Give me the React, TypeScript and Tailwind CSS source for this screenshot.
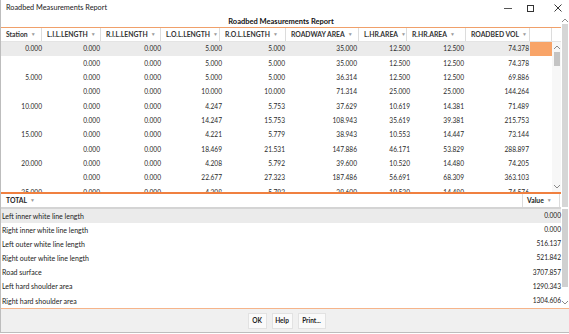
import React from 'react';

const font = { fontFamily: 'Lato, "Liberation Sans", sans-serif' };

const headers = [
  { label: 'Station', w: 'w-[41px]' },
  { label: 'L.I.L.LENGTH', w: 'w-[59px]' },
  { label: 'R.I.L.LENGTH', w: 'w-[60px]' },
  { label: 'L.O.L.LENGTH', w: 'w-[59px]' },
  { label: 'R.O.L.LENGTH', w: 'w-[66px]' },
  { label: 'ROADWAY AREA', w: 'w-[73px]' },
  { label: 'L.HR.AREA', w: 'w-[48px]' },
  { label: 'R.HR.AREA', w: 'w-[59px]' },
  { label: 'ROADBED VOL', w: 'w-[64px]' },
];

// data columns are laid out a touch differently from the header cells
const cellW = ['w-[41px]', 'w-[58px]', 'w-[61px]', 'w-[61px]', 'w-[63px]', 'w-[72px]', 'w-[53px]', 'w-[54px]', 'w-[65px]'];

const rows = [
  ['0.000', '0.000', '0.000', '5.000', '5.000', '35.000', '12.500', '12.500', '74.378'],
  ['', '0.000', '0.000', '5.000', '5.000', '35.000', '12.500', '12.500', '74.378'],
  ['5.000', '0.000', '0.000', '5.000', '5.000', '36.314', '12.500', '12.500', '69.886'],
  ['', '0.000', '0.000', '10.000', '10.000', '71.314', '25.000', '25.000', '144.264'],
  ['10.000', '0.000', '0.000', '4.247', '5.753', '37.629', '10.619', '14.381', '71.489'],
  ['', '0.000', '0.000', '14.247', '15.753', '108.943', '35.619', '39.381', '215.753'],
  ['15.000', '0.000', '0.000', '4.221', '5.779', '38.943', '10.553', '14.447', '73.144'],
  ['', '0.000', '0.000', '18.469', '21.531', '147.886', '46.171', '53.829', '288.897'],
  ['20.000', '0.000', '0.000', '4.208', '5.792', '39.600', '10.520', '14.480', '74.205'],
  ['', '0.000', '0.000', '22.677', '27.323', '187.486', '56.691', '68.309', '363.103'],
  ['25.000', '0.000', '0.000', '4.208', '5.792', '39.600', '10.520', '14.480', '74.576'],
];

const totals = [
  ['Left inner white line length', '0.000'],
  ['Right inner white line length', '0.000'],
  ['Left outer white line length', '516.137'],
  ['Right outer white line length', '521.842'],
  ['Road surface', '3707.857'],
  ['Left hard shoulder area', '1290.343'],
  ['Right hard shoulder area', '1304.606'],
];

function Caret() {
  return <span className="ml-[3px] text-[5px] text-[#9a9a9a]">▼</span>;
}

function UpArrow() {
  return (
    <svg width="6" height="4" viewBox="0 0 6 4">
      <path d="M0 4 L3 1 L6 4" fill="none" stroke="#8a8a8a" strokeWidth="1" />
    </svg>
  );
}

function DownArrow() {
  return (
    <svg width="6" height="4" viewBox="0 0 6 4">
      <path d="M0 0 L3 3 L6 0" fill="none" stroke="#8a8a8a" strokeWidth="1" />
    </svg>
  );
}

export default function App() {
  return (
    <div style={font} className="w-[569px] h-[334px] bg-white overflow-hidden text-[#222]">
      <div className="w-[569px] h-[333px] flex flex-col border-l border-b border-[#bdbdbd]">
        {/* title bar */}
        <div className="h-[16px] flex items-center shrink-0">
          <span className="pl-[5px] text-[7.3px] text-[#222]">Roadbed Measurements Report</span>
          <div className="ml-auto flex items-center pr-[7px]">
            <div className="w-[8px] h-px bg-[#555]" />
            <div className="ml-[15px] w-[7px] h-[7px] border border-[#333]" />
            <svg className="ml-[20px]" width="8" height="8" viewBox="0 0 8 8">
              <path d="M0.5 0.5 L7.5 7.5 M7.5 0.5 L0.5 7.5" stroke="#222" strokeWidth="0.9" />
            </svg>
          </div>
        </div>

        <div className="flex flex-1 min-h-0">
          <div className="w-[560px] flex flex-col">
            {/* report title */}
            <div className="h-[11px] flex items-center justify-center text-[7.5px] font-bold text-[#111]">
              Roadbed Measurements Report
            </div>
            <div className="h-px bg-[#f0a06a]" />

            {/* column headers */}
            <div className="h-[14px] flex items-stretch border-b border-[#e4e4e4]">
              {headers.map(h => (
                <div key={h.label} className={`${h.w} flex items-center pl-[5px] border-r border-[#dcdcdc] text-[6.8px] font-bold text-[#333] whitespace-nowrap`}>
                  {h.label}
                  <Caret />
                </div>
              ))}
              <div className="w-[22px] border-r border-[#dcdcdc]" />
            </div>

            {/* data rows */}
            <div className="h-[150px] flex overflow-hidden">
              <div className="w-[551px] flex flex-col">
                {rows.map((r, i) => (
                  <div key={i} className={`h-[14.33px] shrink-0 flex items-center ${i === 0 ? 'bg-[#ebebeb]' : ''}`}>
                    {r.map((v, j) => (
                      <div key={j} className={`${cellW[j]} text-right text-[6.6px] text-[#2a2a2a]`}>{v}</div>
                    ))}
                    <div className={`ml-[1px] w-[22px] h-full ${i === 0 ? 'bg-[#f8a468]' : ''}`} />
                  </div>
                ))}
              </div>
              <div className="w-[9px] flex flex-col items-center bg-[#f7f7f7]">
                <div className="h-[10px] flex items-center"><UpArrow /></div>
                <div className="w-[6px] h-[14px] bg-[#c4c4c4]" />
                <div className="flex-1" />
                <div className="h-[10px] flex items-center"><DownArrow /></div>
              </div>
            </div>
            <div className="h-[1.5px] bg-[#f08040]" />

            {/* totals header */}
            <div className="h-[13.5px] flex items-stretch">
              <div className="w-[522px] flex items-center pl-[5px] border-r border-[#dcdcdc] text-[6.8px] font-bold">
                TOTAL
                <Caret />
              </div>
              <div className="w-[37px] flex items-center pl-[4px] border-r border-[#dcdcdc] text-[6.8px] font-bold">
                Value
                <Caret />
              </div>
            </div>
            <div className="h-[2px] bg-[#d4d4d4]" />

            {/* totals rows */}
            <div className="flex-1 flex flex-col">
              {totals.map(([label, value], i) => (
                <div key={label} className={`h-[14.14px] shrink-0 flex items-center justify-between ${i === 0 ? 'bg-[#ebebeb]' : ''}`}>
                  <span className="pl-[1px] text-[7px]">{label}</span>
                  <span className="text-[6.6px]">{value}</span>
                </div>
              ))}
            </div>
          </div>

          {/* outer scroll strip */}
          <div className="w-[8px] flex flex-col">
            <div className="h-[8px] flex items-center justify-center"><UpArrow /></div>
            <div className="h-[183px] bg-[#d6d6d6] mx-[1px]" />
            <div className="h-[2px]" />
            <div className="h-[78px] bg-[#d0d0d0] mx-[1px]" />
            <div className="flex-1" />
            <div className="h-[10px] flex items-center justify-center"><DownArrow /></div>
          </div>
        </div>

        <div className="h-px bg-[#f6b48a]" />
        {/* buttons */}
        <div className="h-[23px] shrink-0 bg-[#f0f0f0] flex items-center justify-center gap-[5px] pl-[3px]">
          <button className="w-[19px] h-[16px] bg-[#fafafa] border border-[#e2e2e2] text-[6.5px] font-bold text-[#222]">OK</button>
          <button className="w-[21px] h-[16px] bg-[#fafafa] border border-[#e2e2e2] text-[6.5px] font-bold text-[#222]">Help</button>
          <button className="w-[28px] h-[16px] bg-[#fafafa] border border-[#e2e2e2] text-[6.5px] font-bold text-[#222]">Print...</button>
        </div>
      </div>
    </div>
  );
}
